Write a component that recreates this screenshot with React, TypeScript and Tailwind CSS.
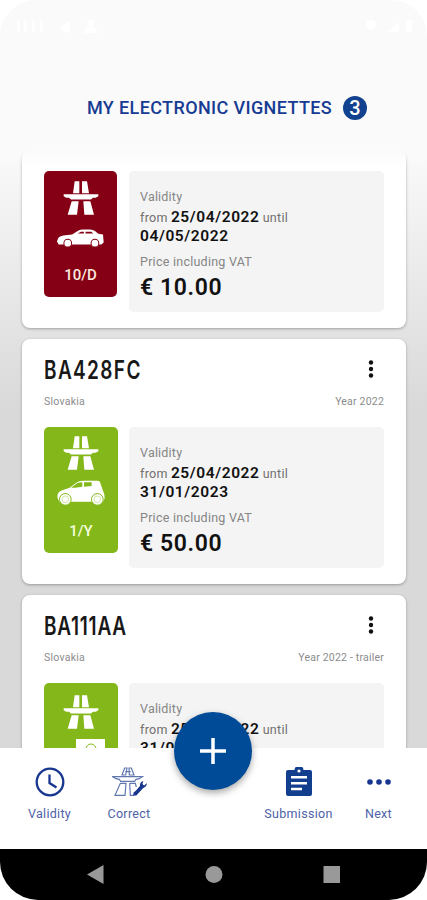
import type { ReactNode } from "react";

type VehicleKind = "sedan" | "hatchback" | "trailer";

interface Vignette {
  id: number;
  plate?: string;
  country?: string;
  label?: string;
  kind: VehicleKind;
  duration?: string;
  from: string;
  until: string;
  price?: string;
}

const vignettes: Vignette[] = [
  { id: 1, kind: "sedan", duration: "10/D", from: "25/04/2022", until: "04/05/2022", price: "10.00" },
  { id: 2, plate: "BA428FC", country: "Slovakia", label: "Year 2022", kind: "hatchback", duration: "1/Y", from: "25/04/2022", until: "31/01/2023", price: "50.00" },
  { id: 3, plate: "BA111AA", country: "Slovakia", label: "Year 2022 - trailer", kind: "trailer", from: "25/04/2022", until: "31/01/2023" },
];

function HighwayIcon() {
  return (
    <svg viewBox="0 0 108 101" className="h-[34px] w-9 shrink-0" fill="white">
      <path d="M35 0H49V36H30ZM57 0H72L78 36H57Z" />
      <path d="M2 39H106V45L98 50H90L84 55H24L18 50H10L2 45Z" />
      <path d="M26 60H47L42 101H14ZM61 60H82L93 101H64Z" />
    </svg>
  );
}

function VehicleIcon({ kind }: { kind: VehicleKind }) {
  if (kind === "sedan") {
    return (
      <svg viewBox="0 0 140 56" className="mt-[14px] h-[19px] w-[47px]">
        <path fill="white" d="M2 31Q3 22 18 19L45 16L64 4Q69 1 77 1H99Q107 1 113 6L123 14L137 16L139 40L132 46H5L0 37Z" />
        <path fill="#850014" d="M62 13L71 8H80V13ZM85 8H102L108 13H85Z" />
        <g fill="white" stroke="#850014" strokeWidth="3">
          <circle cx="32" cy="42" r="11.5" />
          <circle cx="113" cy="42" r="11.5" />
        </g>
      </svg>
    );
  }
  if (kind === "hatchback") {
    return (
      <svg viewBox="0 0 144 76" className="mt-[10px] h-[26px] w-12">
        <path fill="white" d="M2 54Q-2 36 16 30L38 22L58 7Q66 1 78 1H122Q129 1 130 8L137 29Q143 39 143 54L138 64H7Z" />
        <path fill="#84b81a" d="M42 22L60 9Q66 6 76 6V19L54 22ZM81 6H104V17L81 19Z" />
        <g fill="white" stroke="#84b81a" strokeWidth="3">
          <circle cx="25" cy="57" r="17.5" />
          <circle cx="121" cy="57" r="17.5" />
        </g>
        <g fill="none" stroke="#b5d577" strokeWidth="2">
          <circle cx="25" cy="57" r="10" />
          <circle cx="121" cy="57" r="10" />
        </g>
      </svg>
    );
  }
  return (
    <svg viewBox="0 0 48 26" className="mt-[10px] h-[26px] w-12">
      <path fill="white" d="M19 0H48V20H19Z" />
      <circle cx="34" cy="10" r="5" fill="none" stroke="#84b81a" />
    </svg>
  );
}

const badgeStyles: Record<VehicleKind, string> = {
  sedan: "mr-3 w-[73px] bg-[#850014] pt-[10px]",
  hatchback: "mr-[11px] w-[74px] bg-[#84b81a] pt-[9px]",
  trailer: "mr-[11px] w-[74px] bg-[#84b81a] pt-3",
};

function VignetteCard({ item }: { item: Vignette }) {
  const red = item.kind === "sedan";
  return (
    <article className="shrink-0 rounded-lg bg-white px-[22px] pb-4 shadow-[0_1px_3px_rgba(0,0,0,0.3)]">
      {item.plate ? (
        <>
          <div className="flex h-[50px] items-start justify-between pt-[13px]">
            <h2
              className={`origin-left scale-x-[0.76] font-[Inter,sans-serif] text-[25px] leading-[36px] font-semibold text-[#181818] ${
                item.kind === "trailer" ? "tracking-[1px]" : "tracking-[1.8px]"
              }`}
            >
              {item.plate}
            </h2>
            <svg viewBox="0 0 6 18" className="mt-2 mr-[10px] h-[18px] w-[6px]" fill="#111">
              <circle cx="3" cy="2.5" r="2.2" />
              <circle cx="3" cy="9" r="2.2" />
              <circle cx="3" cy="15.5" r="2.2" />
            </svg>
          </div>
          <div className="flex h-[38px] justify-between pt-[5px] text-[10.5px] leading-4 text-[#8b8b8b]">
            <span className="tracking-[0.25px]">{item.country}</span>
            <span className="tracking-[0.2px]">{item.label}</span>
          </div>
        </>
      ) : (
        <div className="h-[21px]" />
      )}
      <div className="flex items-start">
        <div className={`flex h-[126px] shrink-0 flex-col items-center rounded-[5px] ${badgeStyles[item.kind]}`}>
          <HighwayIcon />
          <VehicleIcon kind={item.kind} />
          {item.duration && (
            <span className={red ? "mt-[17px] text-[15px] leading-5 font-medium text-[#ffe9df]" : "mt-[15px] text-[15px] leading-5 font-medium text-[#f3ffdc]"}>
              {item.duration}
            </span>
          )}
        </div>
        <div className="h-[141px] flex-1 rounded-[5px] bg-[#f4f4f4] pt-4 pl-[11px] text-[12.5px] text-[#858585]">
          <p className="h-5 leading-5 tracking-[0.2px]">Validity</p>
          <p className="h-5 leading-5 whitespace-nowrap text-[#707070]">
            <span className="tracking-[0.3px]">from</span>{" "}
            <b className="text-[15.5px] font-semibold tracking-[0.6px] text-[#111]">{item.from}</b>{" "}
            <span className="tracking-[0.3px]">until</span>
          </p>
          <p className="h-[18px] text-[15.5px] leading-[18px] font-semibold tracking-[0.6px] text-[#111]">{item.until}</p>
          {item.price && (
            <>
              <p className="mt-[7px] h-5 leading-5 tracking-[0.25px]">Price including VAT</p>
              <p className="mt-px text-[23px] leading-[29px] font-semibold tracking-[0.6px] text-[#111]">€ {item.price}</p>
            </>
          )}
        </div>
      </div>
    </article>
  );
}

function NavItem({ label, className, children }: { label: string; className: string; children: ReactNode }) {
  return (
    <button className={`flex flex-col items-center pt-[18px] text-[#4d62a8] ${className}`}>
      <span className="flex h-8 items-center justify-center">{children}</span>
      <span className="mt-2 text-[12.5px] leading-4 tracking-[0.3px]">{label}</span>
    </button>
  );
}

export default function App() {
  return (
    <div className="relative flex h-[900px] w-[427px] flex-col overflow-hidden bg-white font-[Roboto,sans-serif]">
      <header className="flex h-[150px] shrink-0 flex-col rounded-t-[36px] bg-[#fafafa]">
        {/* Status bar */}
        <div className="flex h-9 items-end justify-between pr-3 pl-4">
          <svg viewBox="0 0 84 18" className="h-[18px] w-[84px]" fill="white">
            <path d="M1 3H4V13H1ZM8 3H11V13H8ZM16 3H19V13H16ZM24 3H27V13H24Z" />
            <path d="M43 9L54 3V15L48 14ZM68 15Q69 10 73 9A4 4 0 1 1 77 9Q81 11 81 15Z" />
          </svg>
          <svg viewBox="0 0 50 18" className="h-[18px] w-[50px]" fill="white">
            <circle cx="6" cy="7" r="5" />
            <path d="M22 14L34 4V14ZM41 2H47V14H41Z" />
          </svg>
        </div>
        <div className="mt-[60px] flex items-center gap-[10px] pl-[87px]">
          <h1 className="w-[246px] text-[18px] leading-6 font-medium whitespace-nowrap tracking-[0.37px] text-[#173b93]">MY ELECTRONIC VIGNETTES</h1>
          <span className="flex h-6 w-6 items-center justify-center rounded-full bg-[#12418f] text-[20px] leading-6 font-medium text-white">3</span>
        </div>
      </header>

      <main className="relative flex h-[598px] shrink-0 flex-col gap-[11px] overflow-hidden bg-linear-to-b from-[#fafafa] to-[#d9d9d9] to-[260px] pr-[21px] pl-[22px]">
        {vignettes.map((item) => (
          <VignetteCard key={item.id} item={item} />
        ))}
        <div className="absolute inset-x-0 top-0 h-4 bg-linear-to-b from-[#fafafa] to-transparent" />
      </main>

      <nav className="flex h-[101px] shrink-0 bg-white">
        <NavItem label="Validity" className="ml-[10px] w-[79px]">
          <svg viewBox="0 0 30 30" className="h-[30px] w-[30px]" fill="none" stroke="#18368f" strokeWidth="2.3">
            <circle cx="15" cy="15" r="13.3" />
            <path d="M14.5 7.5V16L21.5 20.5" />
          </svg>
        </NavItem>
        <NavItem label="Correct" className="w-[80px]">
          {/* Highway outline with a wrench across the right lane */}
          <svg viewBox="0 0 105 90" className="h-[30px] w-[35px]" fill="none" stroke="#5f77ae" strokeWidth="3.5">
            <path d="M38 3H45L41 24H30ZM51 3H58L66 24H52ZM40 14H56" />
            <path d="M2 29H91L82 35L72 37L68 43H26L22 37L12 35Z" />
            <path d="M25 49H42L39 85H9ZM53 49H70L73 60M53 49L55 85H66" />
            <path d="M68 82L78 72L94 54" stroke="#18368f" strokeWidth="11" />
            <path d="M84 57Q82 46 94 42L91 52L96 56L105 48Q104 61 91 64ZM63 87L66 74L76 83Z" fill="#18368f" stroke="none" />
          </svg>
        </NavItem>
        <NavItem label="Submission" className="ml-[84px] w-[91px]">
          <svg viewBox="0 0 26 29" className="h-[29px] w-[26px] -translate-y-px">
            <path fill="#123e8e" d="M2 3H8.5A4.5 4.5 0 0 1 17.5 3H24Q26 3 26 5V27Q26 29 24 29H2Q0 29 0 27V5Q0 3 2 3Z" />
            <circle cx="13" cy="4" r="1.6" fill="white" />
            <path d="M5 10.3H21M5 16.2H21M5 22H16" stroke="white" strokeWidth="2.6" />
          </svg>
        </NavItem>
        <NavItem label="Next" className="w-[69px]">
          <svg viewBox="0 0 24 8" className="h-2 w-6" fill="#18368f">
            <circle cx="3" cy="4" r="2.8" />
            <circle cx="12" cy="4" r="2.8" />
            <circle cx="21" cy="4" r="2.8" />
          </svg>
        </NavItem>
      </nav>

      <footer className="h-[51px] shrink-0 rounded-b-[38px] bg-black">
        <svg viewBox="0 0 427 51" className="h-[51px] w-full" fill="#999">
          <path d="M87 25.5L103.5 16V35Z" />
          <circle cx="214" cy="25.5" r="8.5" />
          <rect x="323.5" y="17" width="16.5" height="17" />
        </svg>
      </footer>

      <button className="absolute top-[712px] left-[174px] flex h-[78px] w-[78px] items-center justify-center rounded-full bg-[#004b98] shadow-[0_3px_7px_rgba(0,0,0,0.35)]">
        <svg viewBox="0 0 26 26" className="h-[26px] w-[26px]" stroke="white" strokeWidth="3.5">
          <path d="M13 0V26M0 13H26" />
        </svg>
      </button>
    </div>
  );
}
